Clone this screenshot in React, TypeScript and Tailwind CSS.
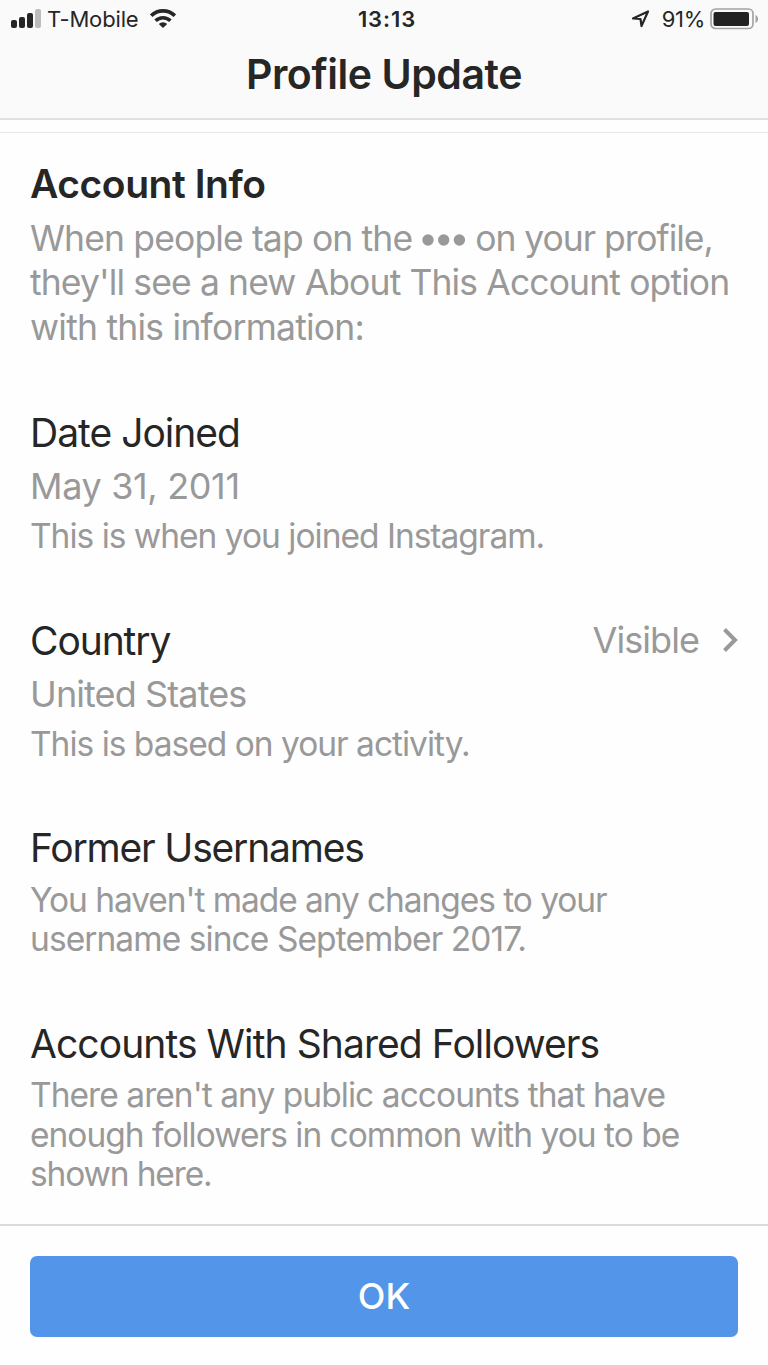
import type { ReactNode } from "react";

const Title = ({ children, className = "" }: { children: ReactNode; className?: string }) => (
    <h2 className={`text-[39px] leading-[48px] whitespace-nowrap text-[#262626] ${className}`}>
        {children}
    </h2>
);

const Line = ({ children, className = "" }: { children: ReactNode; className?: string }) => (
    <div className="flex">
        <span className={`whitespace-nowrap ${className}`}>{children}</span>
    </div>
);

const StatusBar = () => (
    <div className="grid grid-cols-3 items-center h-[38px] pl-[11px] pr-[9px] text-[22px] leading-[38px]">
        <div className="flex items-center">
            <svg width="30" height="20" viewBox="0 0 30 20" fill="currentColor">
                <rect x="0" y="11" width="6" height="8" rx="2" />
                <rect x="8" y="8" width="6" height="11" rx="2" />
                <rect x="16" y="4" width="6" height="15" rx="2" />
                <rect x="24" y="0" width="6" height="19" rx="2" fill="#bcbcbc" />
            </svg>
            <span className="ml-[6px] whitespace-nowrap tracking-[-0.15px]">T-Mobile</span>
            <svg className="ml-[11px]" width="26" height="20" viewBox="0 0 26 20" fill="none" stroke="currentColor" strokeWidth="3.6">
                <path d="M1.2 6.7a16.8 16.8 0 0 1 23.6 0" />
                <path d="M5.6 11.7a10.6 10.6 0 0 1 14.8 0" />
                <path d="M13 19l-4.2-4a6 6 0 0 1 8.4 0z" fill="currentColor" stroke="none" />
            </svg>
        </div>
        <div className="pl-[4px] text-center font-semibold tracking-[0.9px]">13:13</div>
        <div className="flex items-center justify-end">
            <svg width="19" height="18" viewBox="0 0 19 18" fill="none" stroke="currentColor" strokeWidth="2.2" strokeLinejoin="round">
                <path d="M2 8.5L17 1.5L10.5 16L9.5 9z" />
            </svg>
            <span className="ml-[12px] whitespace-nowrap tracking-[-0.3px]">91%</span>
            <svg className="ml-[5px]" width="49" height="22" viewBox="0 0 49 22">
                <rect x="1" y="1" width="42" height="19.5" rx="4.5" fill="none" stroke="#a3a3a3" strokeWidth="1.7" />
                <rect x="3.5" y="4" width="35.5" height="14" rx="2" fill="#222222" />
                <path d="M45.5 7v8c2-1 2.5-2.3 2.5-4s-.5-3-2.5-4z" fill="#a3a3a3" />
            </svg>
        </div>
    </div>
);

export default function App() {
    return (
        <div className="flex flex-col w-[768px] h-[1365px] overflow-hidden bg-[#fefefe] font-['Inter',sans-serif] text-[#262626]">
            <header className="h-[120px] shrink-0 border-b-2 border-[#e0e0e0] bg-[#fafafa]">
                <StatusBar />
                <h1 className="text-center text-[41px] leading-[73px] font-semibold tracking-[-0.43px]">Profile Update</h1>
            </header>

            <main className="flex-1 mt-[12px] border-t border-[#e8e8e8] px-[30px] pt-[27px] text-[#999999]">
                <section>
                    <Title className="font-semibold tracking-[-0.45px]">Account Info</Title>
                    <div className="mt-[9px] text-[35.5px] leading-[44.3px]">
                        <Line className="tracking-[-0.87px]">
                            When people tap on the
                            <svg className="inline-block ml-[10px] mr-[9px] align-baseline" width="44" height="17" viewBox="0 0 44 17" fill="currentColor">
                                <circle cx="6" cy="6" r="5.7" />
                                <circle cx="21.7" cy="6" r="5.7" />
                                <circle cx="37.4" cy="6" r="5.7" />
                            </svg>
                            <span className="tracking-[-1.05px]">on your profile,</span>
                        </Line>
                        <Line className="tracking-[-0.88px]">they'll see a new About This Account option</Line>
                        <Line className="tracking-[-0.76px]">with this information:</Line>
                    </div>
                </section>

                <section className="mt-[59px]">
                    <Title className="tracking-[-1px]">Date Joined</Title>
                    <Line className="mt-[7px] text-[36px] leading-[44px] tracking-[-0.35px]">May 31, 2011</Line>
                    <Line className="mt-[8px] text-[33.5px] leading-[40px] tracking-[-1px]">This is when you joined Instagram.</Line>
                </section>

                <section className="mt-[61px]">
                    <div className="flex items-center justify-between">
                        <Title className="tracking-[-1.1px]">Country</Title>
                        <div className="flex items-center pb-[2px] text-[36px] leading-[46px]">
                            <span className="tracking-[-0.95px]">Visible</span>
                            <svg className="ml-[23px]" width="16" height="24" viewBox="0 0 16 24" fill="none" stroke="currentColor" strokeWidth="4">
                                <path d="M2.5 1.5L13 12L2.5 22.5" />
                            </svg>
                        </div>
                    </div>
                    <Line className="mt-[7px] text-[36px] leading-[44px] tracking-[-0.9px]">United States</Line>
                    <Line className="mt-[8px] text-[33.5px] leading-[40px] tracking-[-1px]">This is based on your activity.</Line>
                </section>

                <section className="mt-[60px]">
                    <Title className="tracking-[-1.2px]">Former Usernames</Title>
                    <div className="mt-[9px] text-[33.5px] leading-[39.6px]">
                        <Line className="tracking-[-1.07px]">You haven't made any changes to your</Line>
                        <Line className="tracking-[-0.92px]">username since September 2017.</Line>
                    </div>
                </section>

                <section className="mt-[60px]">
                    <Title className="tracking-[-0.92px]">Accounts With Shared Followers</Title>
                    <div className="mt-[8px] text-[33.5px] leading-[39.6px]">
                        <Line className="tracking-[-0.95px]">There aren't any public accounts that have</Line>
                        <Line className="tracking-[-1px]">enough followers in common with you to be</Line>
                        <Line className="tracking-[-1.15px]">shown here.</Line>
                    </div>
                </section>
            </main>

            <footer className="h-[141px] shrink-0 border-t-2 border-[#dbdbdb] px-[30px] pt-[30px]">
                <button className="w-full h-[81px] rounded-[7px] bg-[#5295e9] text-[36px] leading-[81px] font-medium text-white">OK</button>
            </footer>
        </div>
    );
}
